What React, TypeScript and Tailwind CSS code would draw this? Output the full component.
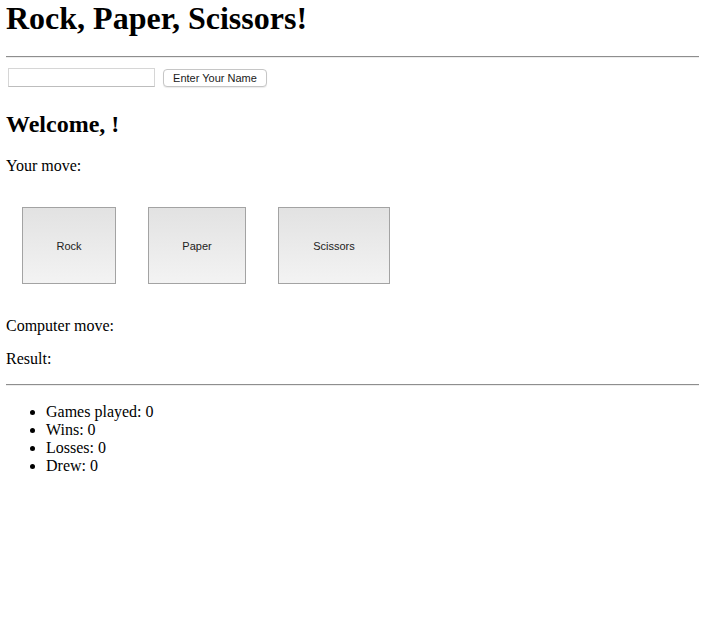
import { useState } from 'react'

const serif = { fontFamily: '"Liberation Serif", "Times New Roman", serif' }
const sans = { fontFamily: '"Liberation Sans", Arial, sans-serif' }

export default function App() {
  const [name, setName] = useState('')
  const [player, setPlayer] = useState('')
  const [stats] = useState({ played: 0, wins: 0, losses: 0, drew: 0 })

  const moves = [
    { label: 'Rock', w: 'w-[94px]' },
    { label: 'Paper', w: 'w-[98px]' },
    { label: 'Scissors', w: 'w-[112px]' },
  ]

  return (
    <div className="min-h-[628px] bg-white pl-[6px] pr-[8px] text-black" style={serif}>
      <h1 className="text-[32px] font-bold leading-[37px]">Rock, Paper, Scissors!</h1>
      <hr className="mt-[19px] h-[2px] border-0 border-t border-t-[#8e8e8e] bg-[#ededed]" />

      <div className="mt-[10px] flex items-center">
        <input
          value={name}
          onChange={(e) => setName(e.target.value)}
          className="ml-[2px] h-[19px] w-[147px] border border-[#d6d6d6] border-b-[#bdbdbd] bg-white px-1 text-[13px] outline-none"
        />
        <button
          onClick={() => setPlayer(name)}
          className="ml-[8px] h-[18px] w-[104px] rounded-[4px] border border-[#c6c6c6] bg-white pt-px text-[11px] leading-none text-[#1a1a1a] shadow-[0_1px_1px_rgba(0,0,0,0.08)]"
          style={sans}
        >
          Enter Your Name
        </button>
      </div>

      <h2 className="mt-[23px] text-[24px] font-bold leading-[28px]">Welcome, {player}!</h2>
      <p className="mt-[19px] text-[16px] leading-[18px]">Your move:</p>

      {/* move buttons */}
      <div className="mt-[32px] ml-[16px] flex gap-[32px]">
        {moves.map((m) => (
          <button
            key={m.label}
            className={`${m.w} h-[77px] border border-[#a3a3a3] bg-gradient-to-b from-[#e2e2e2] to-[#f3f3f3] pt-[2px] text-[11px] text-[#222]`}
            style={sans}
          >
            {m.label}
          </button>
        ))}
      </div>

      <p className="mt-[33px] text-[16px] leading-[18px]">Computer move:</p>
      <p className="mt-[15px] text-[16px] leading-[18px]">Result:</p>
      <hr className="mt-[16px] h-[2px] border-0 border-t border-t-[#8e8e8e] bg-[#ededed]" />

      <ul className="mt-[17px] list-disc pl-[40px] text-[16px] leading-[18px]">
        <li>Games played: {stats.played}</li>
        <li>Wins: {stats.wins}</li>
        <li>Losses: {stats.losses}</li>
        <li>Drew: {stats.drew}</li>
      </ul>
    </div>
  )
}
